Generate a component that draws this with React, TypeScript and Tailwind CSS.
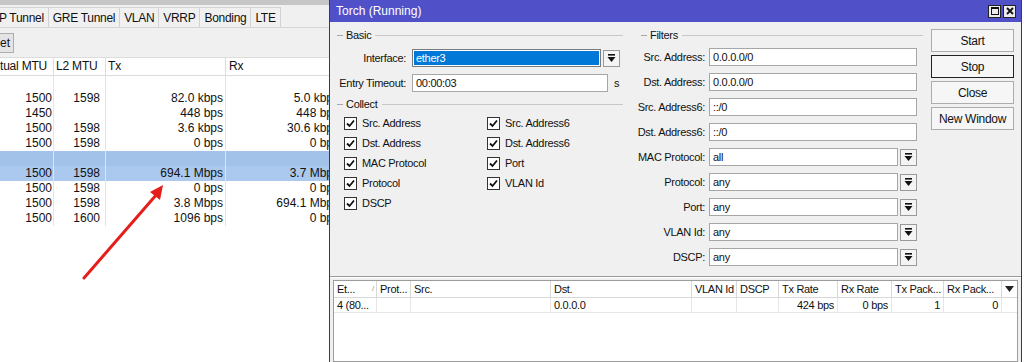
import React from "react";

const font = { fontFamily: '"Liberation Sans", Arial, sans-serif' };

const leftRows = [
  { mtu: "", l2: "", tx: "", rx: "" },
  { mtu: "1500", l2: "1598", tx: "82.0 kbps", rx: "5.0 kbps" },
  { mtu: "1450", l2: "", tx: "448 bps", rx: "448 bps" },
  { mtu: "1500", l2: "1598", tx: "3.6 kbps", rx: "30.6 kbps" },
  { mtu: "1500", l2: "1598", tx: "0 bps", rx: "0 bps" },
  { mtu: "", l2: "", tx: "", rx: "", tone: "bg-[#a3c2ea]" },
  { mtu: "1500", l2: "1598", tx: "694.1 Mbps", rx: "3.7 Mbps", tone: "bg-[#abc8ee]" },
  { mtu: "1500", l2: "1598", tx: "0 bps", rx: "0 bps" },
  { mtu: "1500", l2: "1598", tx: "3.8 Mbps", rx: "694.1 Mbps" },
  { mtu: "1500", l2: "1600", tx: "1096 bps", rx: "0 bps" },
];

const tabs = ["P Tunnel", "GRE Tunnel", "VLAN", "VRRP", "Bonding", "LTE"];

function DropIcon() {
  return (
    <svg width="9" height="9" viewBox="0 0 9 9">
      <rect x="1" y="0" width="7" height="1.6" fill="#111" />
      <path d="M0.5 3 H8.5 L4.5 8 Z" fill="#111" />
    </svg>
  );
}

function DropButton() {
  return (
    <span className="flex h-[17px] w-[17px] items-center justify-center border border-[#9a9a9a] bg-[#f4f4f4]">
      <DropIcon />
    </span>
  );
}

function GroupHeader({ label }: { label: string }) {
  return (
    <div className="flex h-[14px] items-center">
      <span className="ml-[4px] h-px w-[6px] bg-[#a8a8a8]" />
      <span className="ml-[3px] mr-[4px] text-[#111]">{label}</span>
      <span className="h-px flex-1 bg-[#c8c8c8]" />
    </div>
  );
}

function Field({
  label,
  value,
  dropdown = false,
}: {
  label: string;
  value: string;
  dropdown?: boolean;
}) {
  return (
    <div className="flex h-[18px] items-center">
      <span className="flex w-[68px] shrink-0 justify-end whitespace-nowrap text-[#111]">
        <span>{label}</span>
      </span>
      <span className="ml-[4px] flex h-[18px] flex-1 items-center border border-[#a6a6a6] bg-white pl-[3px] text-[#111]">
        {value}
      </span>
      {dropdown && (
        <span className="ml-[2px]">
          <DropButton />
        </span>
      )}
    </div>
  );
}

function Check({ label }: { label: string }) {
  return (
    <div className="flex h-[20px] items-center gap-[5px]">
      <span className="flex h-[13px] w-[13px] items-center justify-center border border-[#333] bg-white">
        <svg width="9" height="9" viewBox="0 0 9 9">
          <path d="M1 4.5 L3.5 7 L8 1.5" fill="none" stroke="#111" strokeWidth="1.8" />
        </svg>
      </span>
      <span className="text-[#111]">{label}</span>
    </div>
  );
}

function WinButton({ label, focused = false }: { label: string; focused?: boolean }) {
  return (
    <div
      className={`flex h-[23px] items-center justify-center border bg-[#f6f6f6] text-[#111] ${
        focused ? "border-[#222]" : "border-[#adadad]"
      }`}
    >
      {label}
    </div>
  );
}

const cols = [
  { name: "Et...", w: "w-[43px]", sort: true },
  { name: "Prot...", w: "w-[34px]" },
  { name: "Src.", w: "w-[140px]" },
  { name: "Dst.", w: "w-[141px]" },
  { name: "VLAN Id", w: "w-[45px]" },
  { name: "DSCP", w: "w-[42px]" },
  { name: "Tx Rate", w: "w-[59px]" },
  { name: "Rx Rate", w: "w-[54px]" },
  { name: "Tx Pack...", w: "w-[52px]" },
  { name: "Rx Pack...", w: "w-[58px]" },
];

const torchRow = [
  { v: "4 (80...", r: false },
  { v: "", r: false },
  { v: "", r: false },
  { v: "0.0.0.0", r: false },
  { v: "", r: false },
  { v: "", r: false },
  { v: "424 bps", r: true },
  { v: "0 bps", r: true },
  { v: "1", r: true },
  { v: "0", r: true },
];

export default function App() {
  return (
    <div className="flex h-[362px] w-[1025px] overflow-hidden bg-white text-[11px]" style={font}>
      {/* Interfaces list behind */}
      <div className="relative flex w-[329px] shrink-0 flex-col overflow-hidden bg-white">
        <div className="h-[5px] bg-[#c6c6c6]" />
        <div className="flex h-[23px] items-stretch border-b border-[#d6d6d6] bg-[#f0f0f0] pt-[2px]">
          {tabs.map((t, i) => (
            <div
              key={t}
              className={`flex items-center border-r border-t border-[#d2d2d2] bg-[#f0f0f0] text-[12px] tracking-[-0.3px] text-[#111] ${
                i === 0 ? "-ml-[1px] pr-[4px]" : "px-[4px]"
              }`}
            >
              {t}
            </div>
          ))}
        </div>
        <div className="flex h-[29px] items-center bg-[#f0f0f0]">
          <div className="flex h-[20px] w-[14px] items-center justify-end border border-l-0 border-[#adadad] bg-[#e4e4e4] pr-[3px] text-[12px] text-[#111]">
            et
          </div>
        </div>
        <div className="flex h-[19px] items-center border-y border-[#dcdcdc] bg-white text-[12px] tracking-[-0.2px] text-[#111]">
          <span className="w-[54px] border-r border-[#dcdcdc] leading-[17px]">tual MTU</span>
          <span className="w-[52px] border-r border-[#dcdcdc] pl-[2px] leading-[17px]">L2 MTU</span>
          <span className="w-[120px] border-r border-[#dcdcdc] pl-[2px] leading-[17px]">Tx</span>
          <span className="flex-1 pl-[3px] leading-[17px]">Rx</span>
        </div>
        <div className="flex flex-col text-[12px] text-[#111]">
          {leftRows.map((r, i) => (
            <div key={i} className={`flex h-[15px] items-center ${r.tone ?? "bg-white"}`}>
              <span className="h-full w-[54px] border-r border-[#e4e4e4] pr-[1px] text-right leading-[15px]">{r.mtu}</span>
              <span className="h-full w-[52px] border-r border-[#e4e4e4] pr-[5px] text-right leading-[15px]">{r.l2}</span>
              <span className="h-full w-[120px] border-r border-[#e4e4e4] pr-[2px] text-right leading-[15px]">{r.tx}</span>
              <span className="h-full flex-1 whitespace-nowrap text-right leading-[15px]">
                <span className="-mr-[10px]">{r.rx}</span>
              </span>
            </div>
          ))}
        </div>
        {/* annotation arrow */}
        <svg className="absolute left-0 top-0" width="329" height="362">
          <line x1="84" y1="278" x2="157" y2="194" stroke="#e41f1b" strokeWidth="3" strokeLinecap="round" />
          <path d="M163 185 L150 192 L160 200 Z" fill="#e41f1b" />
        </svg>
      </div>

      {/* Torch window */}
      <div className="flex w-[693px] shrink-0 flex-col border-x border-[#3c3c3c] bg-[#f0f0f0] tracking-[-0.3px]">
        <div className="flex h-[22px] items-center justify-between bg-[#5050c8] pl-[6px] pr-[5px] text-[12px] tracking-normal text-white">
          <span>Torch (Running)</span>
          <div className="flex gap-[2px]">
            <span className="flex h-[13px] w-[13px] items-center justify-center border border-[#222] bg-[#ececec]">
              <span className="h-[8px] w-[8px] border border-t-2 border-[#111]" />
            </span>
            <span className="flex h-[13px] w-[13px] items-center justify-center border border-[#222] bg-[#ececec]">
              <svg width="8" height="8" viewBox="0 0 8 8">
                <path d="M1 1 L7 7 M7 1 L1 7" stroke="#111" strokeWidth="1.8" />
              </svg>
            </span>
          </div>
        </div>

        <div className="flex h-[254px] pl-[3px]">
          {/* Basic + Collect */}
          <div className="flex w-[290px] flex-col pt-[6px]">
            <GroupHeader label="Basic" />
            <div className="mt-[7px] flex h-[18px] items-center">
              <span className="w-[73px] shrink-0 text-right text-[#111]">Interface:</span>
              <span className="ml-[6px] flex h-[18px] w-[189px] items-center border border-[#7a7a7a] bg-white p-[1px]">
                <span className="flex h-full w-full items-center bg-[#0078d7] pl-[2px] text-white">ether3</span>
              </span>
              <span className="ml-[2px]">
                <DropButton />
              </span>
            </div>
            <div className="mt-[7px] flex h-[18px] items-center">
              <span className="w-[73px] shrink-0 whitespace-nowrap text-right text-[#111]">Entry Timeout:</span>
              <span className="ml-[6px] flex h-[18px] w-[196px] items-center border border-[#a6a6a6] bg-white pl-[3px] text-[#111]">
                00:00:03
              </span>
              <span className="ml-[6px] text-[#111]">s</span>
            </div>
            <div className="mt-[5px]">
              <GroupHeader label="Collect" />
            </div>
            <div className="ml-[11px] mt-[2px] grid grid-cols-[143px_1fr]">
              <div className="flex flex-col">
                <Check label="Src. Address" />
                <Check label="Dst. Address" />
                <Check label="MAC Protocol" />
                <Check label="Protocol" />
                <Check label="DSCP" />
              </div>
              <div className="flex flex-col">
                <Check label="Src. Address6" />
                <Check label="Dst. Address6" />
                <Check label="Port" />
                <Check label="VLAN Id" />
              </div>
            </div>
          </div>

          {/* Filters */}
          <div className="ml-[14px] flex w-[286px] flex-col pt-[6px]">
            <GroupHeader label="Filters" />
            <div className="mt-[6px] flex flex-col gap-[7px] pr-[6px]">
              <Field label="Src. Address:" value="0.0.0.0/0" />
              <Field label="Dst. Address:" value="0.0.0.0/0" />
              <Field label="Src. Address6:" value="::/0" />
              <Field label="Dst. Address6:" value="::/0" />
              <Field label="MAC Protocol:" value="all" dropdown />
              <Field label="Protocol:" value="any" dropdown />
              <Field label="Port:" value="any" dropdown />
              <Field label="VLAN Id:" value="any" dropdown />
              <Field label="DSCP:" value="any" dropdown />
            </div>
          </div>

          {/* Buttons */}
          <div className="ml-[8px] flex w-[83px] flex-col gap-[3px] pt-[7px] text-[12px]">
            <WinButton label="Start" />
            <WinButton label="Stop" focused />
            <WinButton label="Close" />
            <WinButton label="New Window" />
          </div>
        </div>

        <div className="h-px bg-[#9a9a9a]" />
        <div className="h-px bg-white" />

        {/* Torch results */}
        <div className="mx-[3px] mt-[2px] flex-1 border border-[#9c9c9c] bg-white">
          <div className="flex h-[17px] border-b border-[#d8d8d8] text-[#111]">
            {cols.map((c) => (
              <div
                key={c.name}
                className={`${c.w} flex items-center justify-between whitespace-nowrap border-r border-[#d8d8d8] pl-[3px] pr-[2px]`}
              >
                <span>{c.name}</span>
                {c.sort && <span className="text-[8px] text-[#999]">/</span>}
              </div>
            ))}
            <div className="flex flex-1 items-center justify-center">
              <svg width="9" height="6" viewBox="0 0 9 6">
                <path d="M0 0 H9 L4.5 6 Z" fill="#222" />
              </svg>
            </div>
          </div>
          <div className="flex h-[15px] border-b border-[#e6e6e6] text-[#111]">
            {torchRow.map((c, i) => (
              <div
                key={i}
                className={`${cols[i].w} flex items-center whitespace-nowrap border-r border-[#e6e6e6] px-[3px] ${
                  c.r ? "justify-end" : "justify-start"
                }`}
              >
                {c.v}
              </div>
            ))}
          </div>
        </div>
      </div>
      <div className="flex-1 bg-white" />
    </div>
  );
}
